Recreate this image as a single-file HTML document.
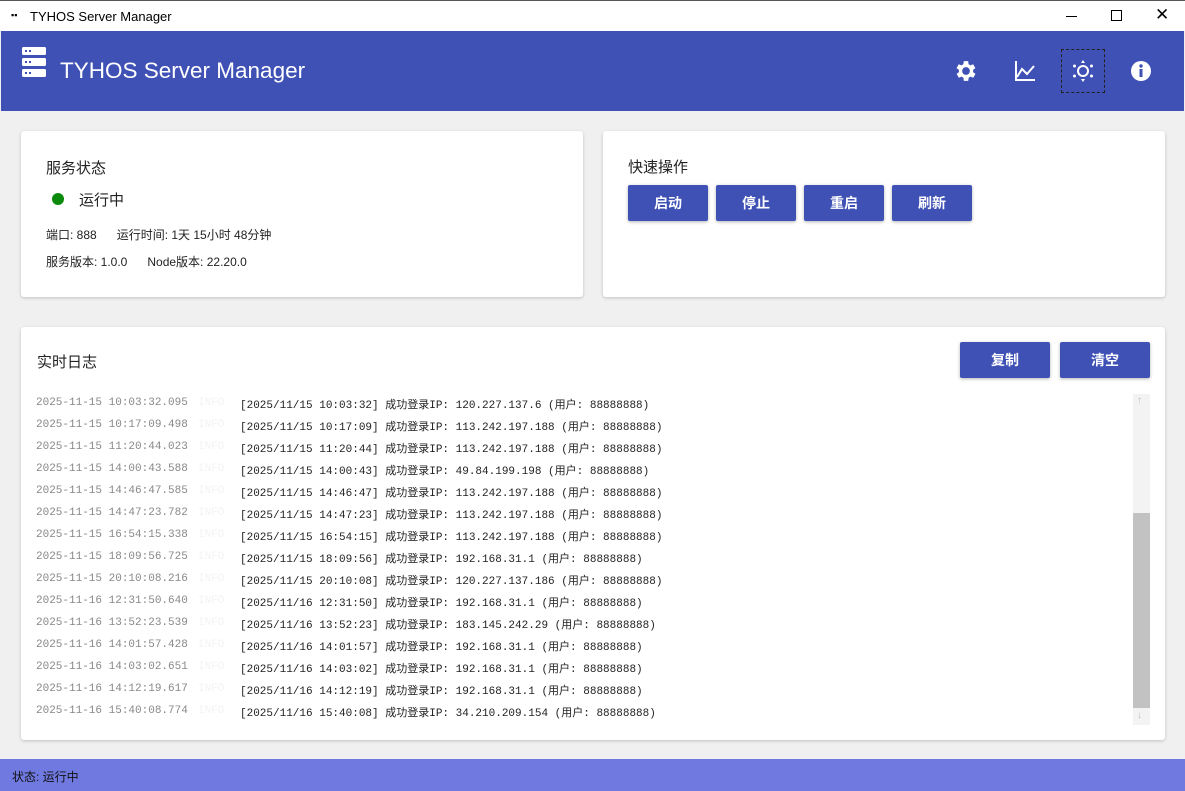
<!DOCTYPE html>
<html><head><meta charset="utf-8"><style>
*{margin:0;padding:0;box-sizing:border-box}
body{width:1185px;height:791px;background:#f0f0f0;font-family:"Liberation Sans","Noto Sans CJK SC",sans-serif;position:relative;overflow:hidden}
.tb{position:absolute;left:0;top:0;width:1185px;height:31px;background:#fff;border-top:1px solid #555}
.tb .t{position:absolute;left:30px;top:8px;font-size:13px;color:#000}
.hdr{position:absolute;left:1px;top:31px;width:1183px;height:80px;background:#3f51b5;color:#fff}
.card{position:absolute;background:#fff;border-radius:3px;box-shadow:0 1px 3px rgba(0,0,0,.2)}
.btn{position:absolute;background:#3f51b5;color:#fff;font-size:14px;font-weight:bold;text-align:center;border-radius:2px;box-shadow:0 1px 3px rgba(0,0,0,.3)}
.log{position:absolute;font-family:"Liberation Mono","Noto Sans CJK SC",monospace;font-size:11px;white-space:pre}
.ts{color:#888}
.lv{color:#f3f3f3}
.msg{color:#222}
.sb{position:absolute;left:0;top:759px;width:1185px;height:32px;background:#7079e0;font-size:12px;color:#111;padding:9px 12px}
</style></head><body>
<div class="tb"><span style="position:absolute;left:11px;top:9px;font-size:9px;font-weight:bold">▪▪</span><span class="t">TYHOS Server Manager</span>
<span style="position:absolute;left:1066px;top:15px;width:11px;height:1px;background:#000"></span>
<span style="position:absolute;left:1111px;top:9px;width:11px;height:11px;border:1px solid #000"></span>
<span style="position:absolute;left:1155px;top:4px;font-size:17px">✕</span></div>
<div class="hdr">
<svg style="position:absolute;left:20px;top:16px" width="26" height="32" viewBox="0 0 26 32"><g fill="#fff"><rect x="1" y="0" width="24" height="8" rx="1.5"/><rect x="1" y="11" width="24" height="8" rx="1.5"/><rect x="1" y="22" width="24" height="8" rx="1.5"/></g><g fill="#3f51b5"><rect x="4" y="3" width="2" height="2"/><rect x="8" y="3" width="2" height="2"/><rect x="4" y="14" width="2" height="2"/><rect x="8" y="14" width="2" height="2"/><rect x="4" y="25" width="2" height="2"/><rect x="8" y="25" width="2" height="2"/></g></svg>
<div style="position:absolute;left:59px;top:27px;font-size:22.5px">TYHOS Server Manager</div>
<svg style="position:absolute;left:954px;top:29px" width="22" height="22" viewBox="2 2 20 20"><path fill="#fff" d="M19.4 13a7.5 7.5 0 000-2l2.1-1.6-2-3.5-2.5 1a7 7 0 00-1.7-1L15 3h-4l-.4 2.9a7 7 0 00-1.7 1l-2.5-1-2 3.5L6.6 11a7.5 7.5 0 000 2l-2.1 1.6 2 3.5 2.5-1a7 7 0 001.7 1L11 21h4l.4-2.9a7 7 0 001.7-1l2.5 1 2-3.5zM13 15.5a3.5 3.5 0 110-7 3.5 3.5 0 010 7z" transform="translate(-1 0)"/></svg>
<svg style="position:absolute;left:1013px;top:29px" width="22" height="22" viewBox="0 0 22 22"><path d="M2 1v19h19" stroke="#fff" stroke-width="2" fill="none"/><path d="M3 17l5-8 5 5 7-8" stroke="#fff" stroke-width="2" fill="none"/></svg>
<div style="position:absolute;left:1060px;top:18px;width:44px;height:44px;border:1px dashed #222"></div>
<svg style="position:absolute;left:1071px;top:29px" width="22" height="22" viewBox="0 0 22 22"><circle cx="11" cy="11" r="5" stroke="#fff" stroke-width="2" fill="none"/><g fill="#fff"><path d="M11 0l2 3h-4z"/><path d="M11 22l2-3h-4z"/><circle cx="2.5" cy="6" r="1.5"/><circle cx="19.5" cy="6" r="1.5"/><circle cx="2.5" cy="16" r="1.5"/><circle cx="19.5" cy="16" r="1.5"/></g></svg>
<svg style="position:absolute;left:1129px;top:29px" width="22" height="22" viewBox="0 0 22 22"><circle cx="11" cy="11" r="10" fill="#fff"/><rect x="9.5" y="9" width="3" height="8" fill="#3f51b5"/><circle cx="11" cy="6" r="1.7" fill="#3f51b5"/></svg>
</div>
<div class="card" style="left:21px;top:131px;width:562px;height:166px">
<div style="position:absolute;left:25px;top:26px;font-size:15px;color:#222">服务状态</div>
<div style="position:absolute;left:31px;top:62px;width:12px;height:12px;border-radius:50%;background:#0a8a0a"></div>
<div style="position:absolute;left:58px;top:58px;font-size:15px;color:#222">运行中</div>
<div style="position:absolute;left:25px;top:95px;font-size:12px;color:#222">端口: 888 &nbsp;&nbsp;&nbsp;&nbsp;&nbsp;运行时间: 1天 15小时 48分钟</div>
<div style="position:absolute;left:25px;top:122px;font-size:12px;color:#222">服务版本: 1.0.0 &nbsp;&nbsp;&nbsp;&nbsp;&nbsp;Node版本: 22.20.0</div>
</div>
<div class="card" style="left:603px;top:131px;width:562px;height:166px">
<div style="position:absolute;left:25px;top:25px;font-size:15px;color:#222">快速操作</div>
</div>
<div class="btn" style="left:628px;top:185px;width:80px;height:36px;line-height:36px">启动</div>
<div class="btn" style="left:716px;top:185px;width:80px;height:36px;line-height:36px">停止</div>
<div class="btn" style="left:804px;top:185px;width:80px;height:36px;line-height:36px">重启</div>
<div class="btn" style="left:892px;top:185px;width:80px;height:36px;line-height:36px">刷新</div>
<div class="card" style="left:21px;top:327px;width:1144px;height:413px">
<div style="position:absolute;left:16px;top:24px;font-size:15px;color:#222">实时日志</div>
<div style="position:absolute;left:1112px;top:67px;width:17px;height:331px;background:#f3f3f3"></div>
<div style="position:absolute;left:1112px;top:186px;width:17px;height:195px;background:#c2c2c2"></div>
<div style="position:absolute;left:1116px;top:68px;font-size:10px;color:#bbb">↑</div>
<div style="position:absolute;left:1116px;top:383px;font-size:10px;color:#bbb">↓</div>
</div>
<div class="btn" style="left:960px;top:342px;width:90px;height:36px;line-height:36px">复制</div>
<div class="btn" style="left:1060px;top:342px;width:90px;height:36px;line-height:36px">清空</div>
<div id="logs"></div>
<div class="sb">状态: 运行中</div>
<script>
var d=[["2025-11-15 10:03:32.095","2025/11/15 10:03:32","120.227.137.6"],["2025-11-15 10:17:09.498","2025/11/15 10:17:09","113.242.197.188"],["2025-11-15 11:20:44.023","2025/11/15 11:20:44","113.242.197.188"],["2025-11-15 14:00:43.588","2025/11/15 14:00:43","49.84.199.198"],["2025-11-15 14:46:47.585","2025/11/15 14:46:47","113.242.197.188"],["2025-11-15 14:47:23.782","2025/11/15 14:47:23","113.242.197.188"],["2025-11-15 16:54:15.338","2025/11/15 16:54:15","113.242.197.188"],["2025-11-15 18:09:56.725","2025/11/15 18:09:56","192.168.31.1"],["2025-11-15 20:10:08.216","2025/11/15 20:10:08","120.227.137.186"],["2025-11-16 12:31:50.640","2025/11/16 12:31:50","192.168.31.1"],["2025-11-16 13:52:23.539","2025/11/16 13:52:23","183.145.242.29"],["2025-11-16 14:01:57.428","2025/11/16 14:01:57","192.168.31.1"],["2025-11-16 14:03:02.651","2025/11/16 14:03:02","192.168.31.1"],["2025-11-16 14:12:19.617","2025/11/16 14:12:19","192.168.31.1"],["2025-11-16 15:40:08.774","2025/11/16 15:40:08","34.210.209.154"]];
var h="";d.forEach(function(r,i){var y=i*22;h+='<div class="log ts" style="left:36px;top:'+(397+y)+'px">'+r[0]+'</div><div class="log lv" style="left:198px;top:'+(397+y)+'px">INFO</div><div class="log msg" style="left:240px;top:'+(396+y)+'px">['+r[1]+'] 成功登录IP: '+r[2]+' (用户: 88888888)</div>';});
document.getElementById("logs").innerHTML=h;
</script>
</body></html>
